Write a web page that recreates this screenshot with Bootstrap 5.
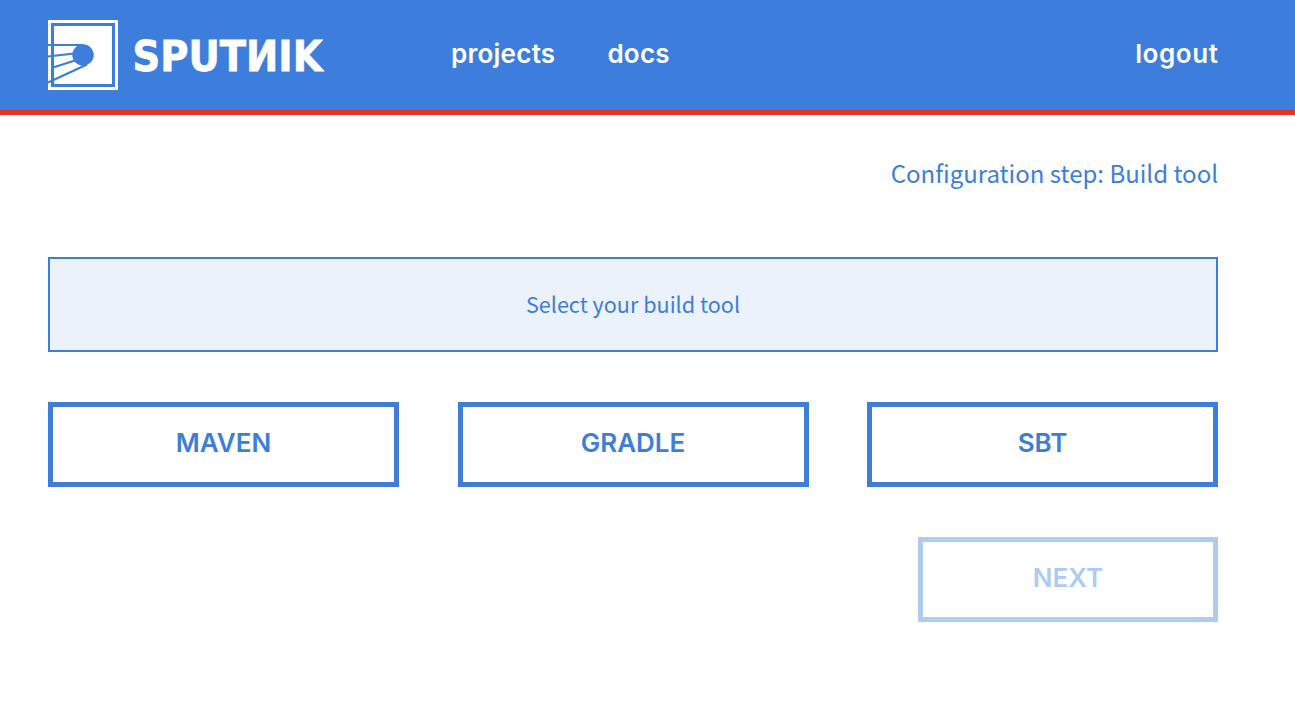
<!DOCTYPE html>
<html lang="en">
<head>
<meta charset="utf-8">
<meta name="viewport" content="width=device-width, initial-scale=1">
<title>Sputnik</title>
<link href="https://cdn.jsdelivr.net/npm/bootstrap@5.3.0/dist/css/bootstrap.min.css" rel="stylesheet">
<style>
  :root { --sp-blue: #3d7edc; --sp-red: #e83123; }
  body { font-family: "Noto Sans CJK JP", sans-serif; color: var(--sp-blue); overflow: hidden; }
  .page-width { width: 1218px; padding-left: 48px; }
  .site-header { height: 115px; background: var(--sp-blue); border-bottom: 5px solid var(--sp-red); }
  .site-header .nav-link, .tool-btn { font-family: Inter, sans-serif; font-weight: 600; font-size: 26px; line-height: 40px; }
  .site-header .nav-link { color: #fff; letter-spacing: .25px; margin-bottom: 3px; }
  .site-header .logout-link { letter-spacing: .6px; margin-right: -.6px; }
  .brand-logo { overflow: visible; }
  .main-nav { margin-left: 113px; gap: 52px; }
  .step-title { font-size: 24px; line-height: 36px; margin-top: 40px; }
  .prompt-box { height: 95px; margin-top: 66px; border: 2px solid var(--sp-blue); background: #ebf2fc; font-size: 21.6px; }
  .tool-btn { width: 351px; height: 85px; border: 5px solid var(--sp-blue); border-radius: 0; color: var(--sp-blue); padding: 0 0 4px; }
  .next-btn { width: 300px; }
  .next-btn:disabled { border-color: #b0cbf1; color: #b0cbf1; opacity: 1; }
  .tools, .actions { margin-top: 50px; }
</style>
</head>
<body>
<header class="site-header">
  <div class="page-width h-100 d-flex align-items-center">
    <a href="#" class="d-flex" aria-label="Sputnik">
      <svg class="brand-logo" width="290" height="70" viewBox="0 0 290 70">
        <path fill="#fff" d="M0 0h70v70H0z"/>
        <path fill="none" stroke="#3d7edc" stroke-width="3" d="M4.500 4.500h61v61h-61z"/>
        <circle cx="35" cy="35" r="10.700" fill="#3d7edc"/>
        <path fill="none" stroke="#3d7edc" stroke-width="2" d="M0 25h35M0 36.500l26-3M5 47.500l22-7M0 62.500l39-18"/>
        <text x="84.500" y="50.500" textLength="190" lengthAdjust="spacingAndGlyphs" fill="#fff" stroke="#fff" stroke-width=".8" font-family="DejaVu Sans, sans-serif" font-weight="700" font-size="42.500">SPUTИIK</text>
      </svg>
    </a>
    <nav class="nav main-nav">
      <a class="nav-link p-0" href="#">projects</a>
      <a class="nav-link p-0" href="#">docs</a>
    </nav>
    <a class="nav-link logout-link p-0 ms-auto" href="#">logout</a>
  </div>
</header>
<main class="page-width">
  <h1 class="step-title text-end fw-normal mb-0">Configuration step: Build tool</h1>
  <div class="prompt-box d-flex align-items-center justify-content-center">Select your build tool</div>
  <div class="tools d-flex justify-content-between">
    <button type="button" class="btn tool-btn">MAVEN</button>
    <button type="button" class="btn tool-btn">GRADLE</button>
    <button type="button" class="btn tool-btn">SBT</button>
  </div>
  <div class="actions d-flex justify-content-end">
    <button type="button" class="btn tool-btn next-btn" disabled>NEXT</button>
  </div>
</main>
<script src="https://cdn.jsdelivr.net/npm/bootstrap@5.3.0/dist/js/bootstrap.bundle.min.js"></script>
</body>
</html>
